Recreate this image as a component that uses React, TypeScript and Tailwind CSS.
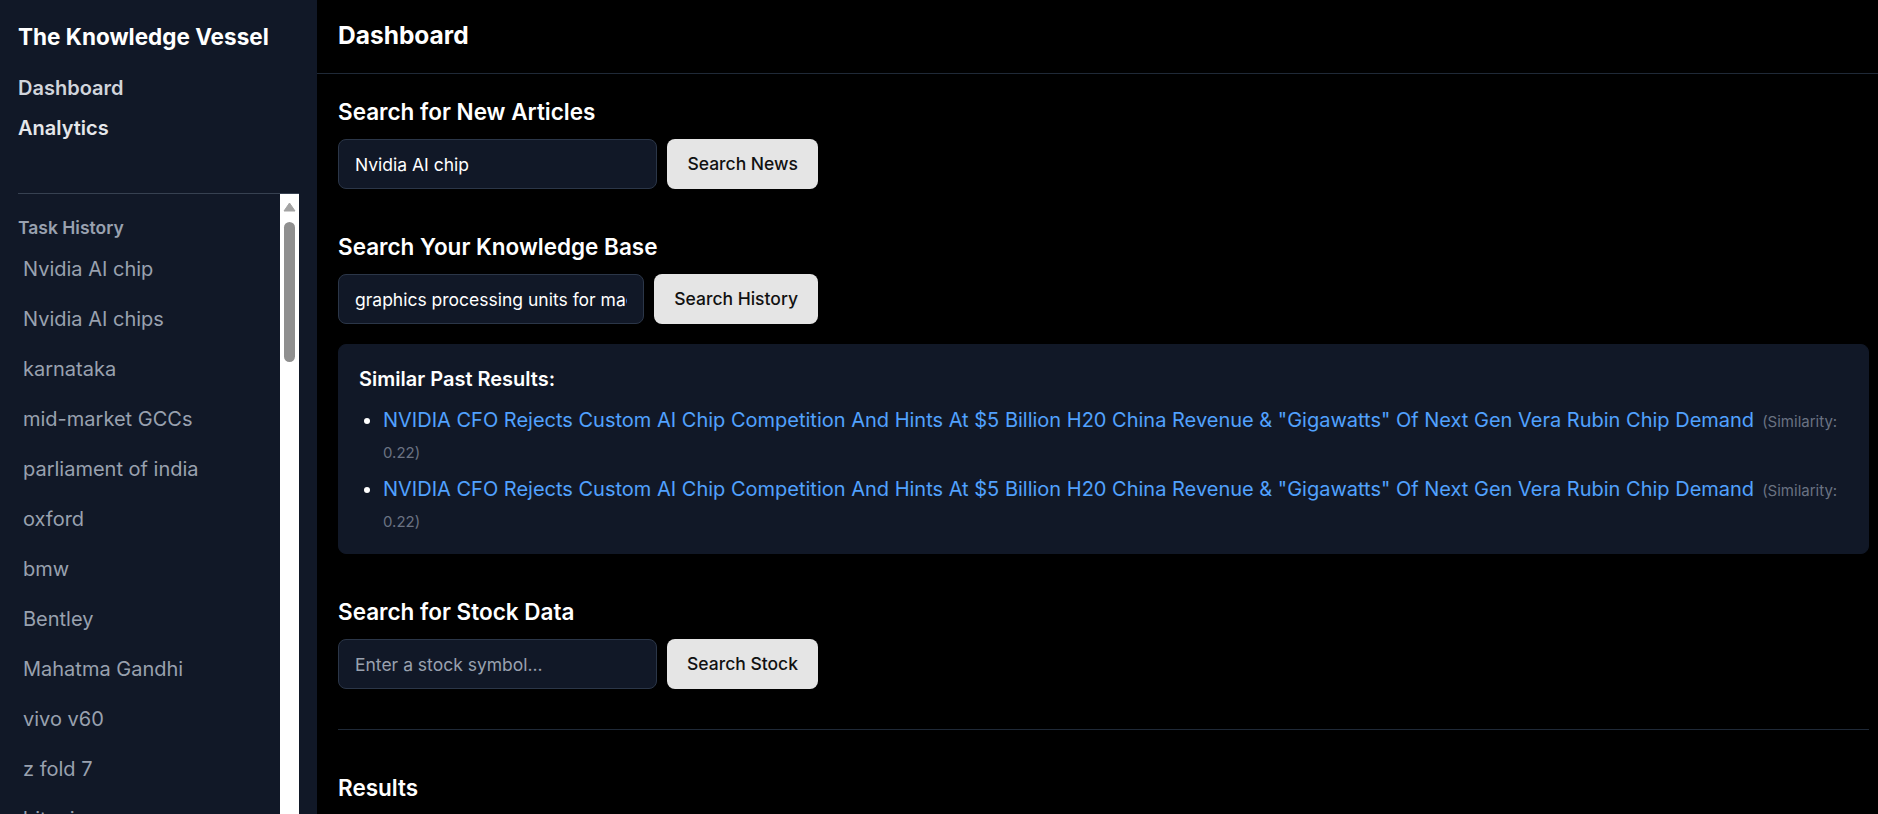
import { useState } from "react";

const HISTORY = [
  "Nvidia AI chip",
  "Nvidia AI chips",
  "karnataka",
  "mid-market GCCs",
  "parliament of india",
  "oxford",
  "bmw",
  "Bentley",
  "Mahatma Gandhi",
  "vivo v60",
  "z fold 7",
  "bitcoin",
  "tesla",
];

const TITLE =
  'NVIDIA CFO Rejects Custom AI Chip Competition And Hints At $5 Billion H20 China Revenue & "Gigawatts" Of Next Gen Vera Rubin Chip Demand';

const PAST = [
  { title: TITLE, score: 0.22 },
  { title: TITLE, score: 0.22 },
];

function SearchRow({
  value,
  placeholder,
  label,
  onChange,
}: {
  value: string;
  placeholder: string;
  label: string;
  onChange: (v: string) => void;
}) {
  return (
    <div className="flex gap-2.5 w-[480px]">
      <input
        value={value}
        placeholder={placeholder}
        onChange={e => onChange(e.target.value)}
        className="flex-1 min-w-0 h-[50px] rounded-lg border border-[#2b3648] bg-[#111827] px-4 text-[17.5px] text-white placeholder:text-gray-400 outline-none"
      />
      <button className="h-[50px] px-5 rounded-lg bg-[#e5e5e5] text-[17.5px] font-medium text-[#111] shrink-0">
        {label}
      </button>
    </div>
  );
}

export default function App() {
  const [news, setNews] = useState("Nvidia AI chip");
  const [kb, setKb] = useState("graphics processing units for machine learning");
  const [stock, setStock] = useState("");

  return (
    <div className="flex h-screen overflow-hidden bg-black font-['Inter',sans-serif]">
      {/* Sidebar */}
      <aside className="w-[317px] shrink-0 bg-[#111827] flex flex-col px-[18px] pt-[22px]">
        <h1 className="text-[22.5px] leading-[30px] font-bold text-white">The Knowledge Vessel</h1>
        <nav className="mt-[22px] flex flex-col gap-3">
          <a className="text-[20px] font-semibold text-gray-300 leading-7">Dashboard</a>
          <a className="text-[20px] font-semibold text-gray-200 leading-7">Analytics</a>
        </nav>

        {/* Task history */}
        <div className="mt-[51px] flex-1 min-h-0 border-t border-[#374151] flex">
          <div className="flex-1 overflow-hidden pt-[22px]">
            <div className="text-[17.5px] font-semibold text-gray-400 leading-6">Task History</div>
            <ul className="mt-1">
              {HISTORY.map((h, i) => (
                <li key={i} className="px-[5px] py-[11px] text-[20px] leading-7 text-gray-400">
                  {h}
                </li>
              ))}
            </ul>
          </div>
          {/* scrollbar */}
          <div className="w-[19px] bg-white flex flex-col items-center">
            <svg width="13" height="10" viewBox="0 0 13 10" className="mt-[8px]">
              <path d="M6.5 1 L12 9 L1 9 Z" fill="#a3a3a3" stroke="#a3a3a3" strokeWidth="1" strokeLinejoin="round" />
            </svg>
            <div className="mt-[10px] w-[11px] h-[140px] rounded-full bg-[#8f8f8f]" />
          </div>
        </div>
      </aside>

      {/* Main */}
      <main className="flex-1 min-w-0 flex flex-col">
        <header className="border-b border-[#1f2937] pl-[21px] pt-[19px] pb-[22px]">
          <h2 className="text-[24.5px] font-bold text-white leading-8">Dashboard</h2>
        </header>

        <div className="pl-[21px] pr-[9px] pt-[23px]">
          <section>
            <h3 className="text-[22.5px] leading-[30px] font-semibold text-white mb-3">Search for New Articles</h3>
            <SearchRow value={news} onChange={setNews} placeholder="Enter a topic..." label="Search News" />
          </section>

          <section className="mt-[43px]">
            <h3 className="text-[22.5px] leading-[30px] font-semibold text-white mb-3">Search Your Knowledge Base</h3>
            <SearchRow value={kb} onChange={setKb} placeholder="Search your history..." label="Search History" />

            <div className="mt-5 rounded-lg bg-[#111827] border border-[#111827] px-5 pt-5 pb-[17px]">
              <h4 className="text-[20px] leading-7 font-semibold text-white">Similar Past Results:</h4>
              <ul className="mt-3 list-disc pl-6 text-white space-y-[7px]">
                {PAST.map((p, i) => (
                  <li key={i} className="text-[20px] leading-[31px]">
                    <a className="text-blue-400">{p.title}</a>
                    <span className="ml-2 text-[15px] leading-4 text-gray-500">(Similarity: {p.score.toFixed(2)})</span>
                  </li>
                ))}
              </ul>
            </div>
          </section>

          <section className="mt-[43px]">
            <h3 className="text-[22.5px] leading-[30px] font-semibold text-white mb-3">Search for Stock Data</h3>
            <SearchRow value={stock} onChange={setStock} placeholder="Enter a stock symbol..." label="Search Stock" />
          </section>

          <hr className="mt-10 border-t border-[#1f2937]" />

          <section className="mt-[43px]">
            <h3 className="text-[22.5px] leading-[30px] font-semibold text-white">Results</h3>
          </section>
        </div>
      </main>
    </div>
  );
}
